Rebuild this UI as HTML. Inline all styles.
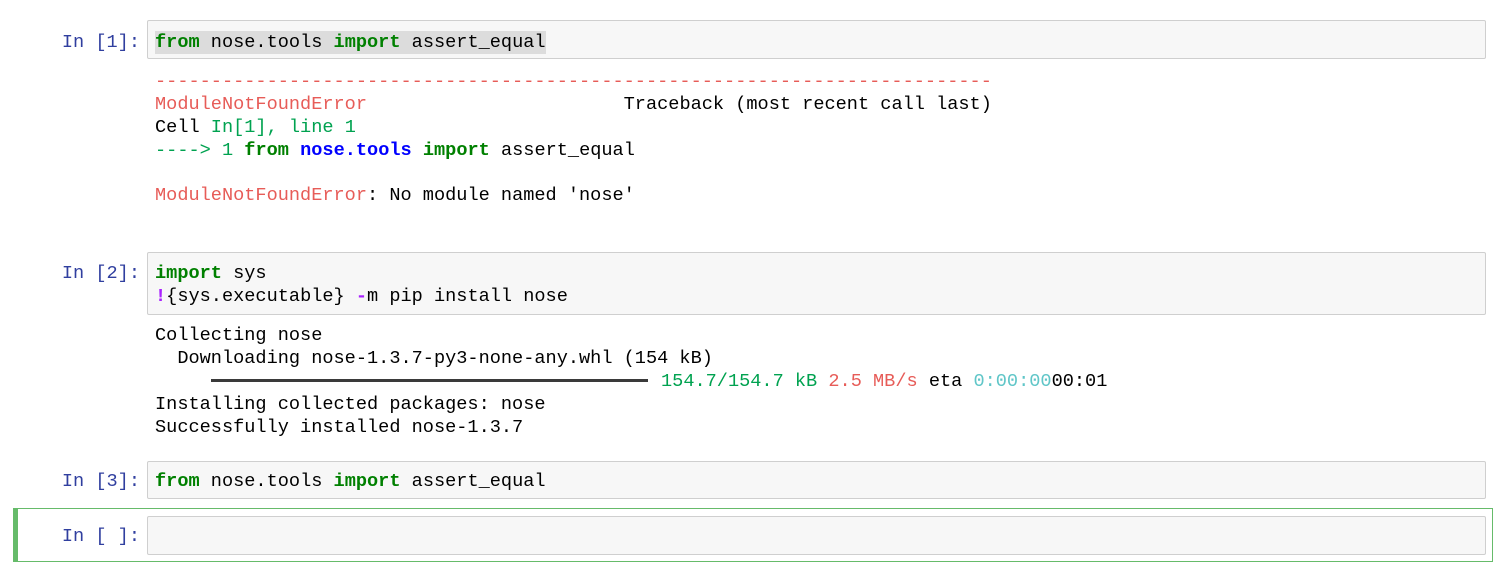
<!DOCTYPE html>
<html><head><style>
html,body{margin:0;padding:0;background:#fff;width:1508px;height:574px;overflow:hidden;position:relative}
.l{position:absolute;font-family:"Liberation Mono",monospace;font-size:18.6px;line-height:23px;white-space:pre;color:#000}
.p{position:absolute;font-family:"Liberation Mono",monospace;font-size:18.6px;line-height:23px;white-space:pre;color:#303f9f;right:1368px;text-align:right}
.box{position:absolute;left:147px;width:1337px;background:#f7f7f7;border:1px solid #cfcfcf;border-radius:2px}
.k{color:#008000;font-weight:bold}
.r{color:#e75c58}
.g{color:#00a250}
.b{color:#0000ff;font-weight:bold}
.pu{color:#aa22ff;font-weight:bold}
.c{color:#60c6c8}
</style></head><body>
<div class="box" style="top:20px;height:37px"></div>
<div class="p" style="top:31px">In [1]:</div>
<div class="l" style="left:155px;top:31px;background:#dcdcdc"><span class="k">from</span> nose.tools <span class="k">import</span> assert_equal</div>
<div class="l r" style="left:155px;top:70px">---------------------------------------------------------------------------</div>
<div class="l" style="left:155px;top:93px"><span class="r">ModuleNotFoundError</span>                       Traceback (most recent call last)</div>
<div class="l" style="left:155px;top:116px">Cell <span class="g">In[1], line 1</span></div>
<div class="l" style="left:155px;top:139px"><span class="g">----&gt; 1</span> <span class="k">from</span> <span class="b">nose.tools</span> <span class="k">import</span> assert_equal</div>
<div class="l" style="left:155px;top:184px"><span class="r">ModuleNotFoundError</span>: No module named 'nose'</div>

<div class="box" style="top:252px;height:61px"></div>
<div class="p" style="top:262px">In [2]:</div>
<div class="l" style="left:155px;top:262px"><span class="k">import</span> sys</div>
<div class="l" style="left:155px;top:285px"><span class="pu">!</span>{sys.executable} <span class="pu">-</span>m pip install nose</div>
<div class="l" style="left:155px;top:324px">Collecting nose</div>
<div class="l" style="left:155px;top:347px">  Downloading nose-1.3.7-py3-none-any.whl (154 kB)</div>
<div style="position:absolute;left:211px;top:379px;width:437px;height:3px;background:#3a3a3a"></div>
<div class="l" style="left:661px;top:370px"><span class="g">154.7/154.7 kB</span> <span class="r">2.5 MB/s</span> eta <span class="c">0:00:00</span>00:01</div>
<div class="l" style="left:155px;top:393px">Installing collected packages: nose</div>
<div class="l" style="left:155px;top:416px">Successfully installed nose-1.3.7</div>

<div class="box" style="top:461px;height:36px"></div>
<div class="p" style="top:470px">In [3]:</div>
<div class="l" style="left:155px;top:470px"><span class="k">from</span> nose.tools <span class="k">import</span> assert_equal</div>

<div style="position:absolute;left:13px;top:508px;width:1480px;height:54px;border:1px solid #66bb6a;border-left:5px solid #66bb6a;box-sizing:border-box"></div>
<div class="box" style="top:516px;height:37px"></div>
<div class="p" style="top:525px">In [ ]:</div>
</body></html>
